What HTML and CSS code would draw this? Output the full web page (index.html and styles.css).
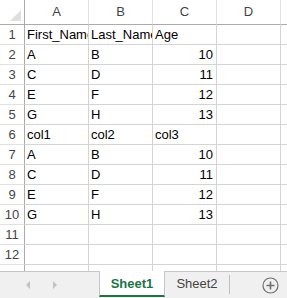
FILE: index.html
```html
<!DOCTYPE html>
<html lang="en">
<head>
  <meta charset="UTF-8" />
  <title>Sheet1</title>
  <link rel="stylesheet" href="styles.css">
</head>
<body>
  <div class="sheet">
    <div class="grid">
      <div class="corner"><span class="corner-mark"></span></div>
      <div class="col-head">A</div>
      <div class="col-head">B</div>
      <div class="col-head">C</div>
      <div class="col-head">D</div>
      <div class="col-head"></div>

      <div class="row-head">1</div>
      <div class="cell">First_Name</div>
      <div class="cell">Last_Name</div>
      <div class="cell">Age</div>
      <div class="cell"></div>
      <div class="cell"></div>

      <div class="row-head">2</div>
      <div class="cell">A</div>
      <div class="cell">B</div>
      <div class="cell num">10</div>
      <div class="cell"></div>
      <div class="cell"></div>

      <div class="row-head">3</div>
      <div class="cell">C</div>
      <div class="cell">D</div>
      <div class="cell num">11</div>
      <div class="cell"></div>
      <div class="cell"></div>

      <div class="row-head">4</div>
      <div class="cell">E</div>
      <div class="cell">F</div>
      <div class="cell num">12</div>
      <div class="cell"></div>
      <div class="cell"></div>

      <div class="row-head">5</div>
      <div class="cell">G</div>
      <div class="cell">H</div>
      <div class="cell num">13</div>
      <div class="cell"></div>
      <div class="cell"></div>

      <div class="row-head">6</div>
      <div class="cell">col1</div>
      <div class="cell">col2</div>
      <div class="cell">col3</div>
      <div class="cell"></div>
      <div class="cell"></div>

      <div class="row-head">7</div>
      <div class="cell">A</div>
      <div class="cell">B</div>
      <div class="cell num">10</div>
      <div class="cell"></div>
      <div class="cell"></div>

      <div class="row-head">8</div>
      <div class="cell">C</div>
      <div class="cell">D</div>
      <div class="cell num">11</div>
      <div class="cell"></div>
      <div class="cell"></div>

      <div class="row-head">9</div>
      <div class="cell">E</div>
      <div class="cell">F</div>
      <div class="cell num">12</div>
      <div class="cell"></div>
      <div class="cell"></div>

      <div class="row-head">10</div>
      <div class="cell">G</div>
      <div class="cell">H</div>
      <div class="cell num">13</div>
      <div class="cell"></div>
      <div class="cell"></div>

      <div class="row-head">11</div>
      <div class="cell"></div>
      <div class="cell"></div>
      <div class="cell"></div>
      <div class="cell"></div>
      <div class="cell"></div>

      <div class="row-head">12</div>
      <div class="cell"></div>
      <div class="cell"></div>
      <div class="cell"></div>
      <div class="cell"></div>
      <div class="cell"></div>

      <!-- row 13 is only a sliver above the tab bar -->
      <div class="row-head"></div>
      <div class="cell"></div>
      <div class="cell"></div>
      <div class="cell"></div>
      <div class="cell"></div>
      <div class="cell"></div>
    </div>
  </div>

  <div class="tabbar">
    <div class="tab-nav">
      <span class="arrow arrow-left"></span>
      <span class="arrow arrow-right"></span>
    </div>
    <div class="tab active">Sheet1</div>
    <div class="tab">Sheet2</div>
    <div class="tab-sep"></div>
    <div class="tab-add">
      <svg width="17" height="17" viewBox="0 0 17 17">
        <circle cx="8.5" cy="8.5" r="7.5" fill="none" stroke="#6f6f6f" stroke-width="1.2" />
        <path d="M8.5 4.5v8M4.5 8.5h8" stroke="#6f6f6f" stroke-width="1.6" />
      </svg>
    </div>
  </div>
</body>
</html>
```

FILE: styles.css
```css
body {
  margin: 0;
  font-family: "Liberation Sans", Arial, sans-serif;
  font-size: 13px;
  color: #000;
  background: #fff;
  overflow: hidden;
}
.sheet {
  height: 271px;
  overflow: hidden;
}
.grid {
  display: grid;
  grid-template-columns: 25px 64px 64px 64px 64px 64px;
  grid-template-rows: 25px repeat(13, 20px);
}
.corner {
  position: relative;
  border-right: 1px solid #ababab;
  border-bottom: 1px solid #ababab;
}
.corner-mark {
  position: absolute;
  right: 3px;
  bottom: 3px;
  width: 0;
  height: 0;
  border-left: 11px solid transparent;
  border-bottom: 11px solid #dfdfdf;
}
.col-head {
  border-right: 1px solid #e1e1e1;
  border-bottom: 1px solid #ababab;
  color: #444;
  text-align: center;
  line-height: 24px;
}
.row-head {
  border-right: 1px solid #ababab;
  border-bottom: 1px solid #e1e1e1;
  color: #444;
  text-align: center;
  line-height: 19px;
}
.cell {
  border-right: 1px solid #d4d4d4;
  border-bottom: 1px solid #d4d4d4;
  padding: 0 3px 0 2px;
  line-height: 19px;
  white-space: nowrap;
  overflow: hidden;
  text-overflow: clip;
}
.num {
  text-align: right;
}
.tabbar {
  display: flex;
  height: 27px;
  background: #f0f0f0;
  border-top: 1px solid #c6c6c6;
  box-sizing: border-box;
}
.tab-nav {
  width: 99px;
  display: flex;
  align-items: center;
  gap: 23px;
  padding-left: 26px;
  box-sizing: border-box;
}
.arrow {
  width: 0;
  height: 0;
  border-top: 4px solid transparent;
  border-bottom: 4px solid transparent;
}
.arrow-left {
  border-right: 4px solid #c2c2c2;
}
.arrow-right {
  border-left: 4px solid #c2c2c2;
}
.tab {
  width: 64px;
  color: #444;
  text-align: center;
  line-height: 22px;
  padding-top: 1px;
}
.tab.active {
  width: 66px;
  margin-top: -1px;
  background: #fff;
  color: #217346;
  font-weight: bold;
  border-left: 1px solid #c6c6c6;
  border-right: 1px solid #c6c6c6;
  border-bottom: 2px solid #217346;
  box-sizing: border-box;
  height: 26px;
  line-height: 24px;
  padding-top: 1px;
}
.tab-sep {
  width: 1px;
  height: 19px;
  margin-top: 3px;
  background: #bdbdbd;
}
.tab-add {
  margin-left: auto;
  margin-right: 8px;
  display: flex;
  align-items: center;
}
.tab-add svg {
  display: block;
}
```
